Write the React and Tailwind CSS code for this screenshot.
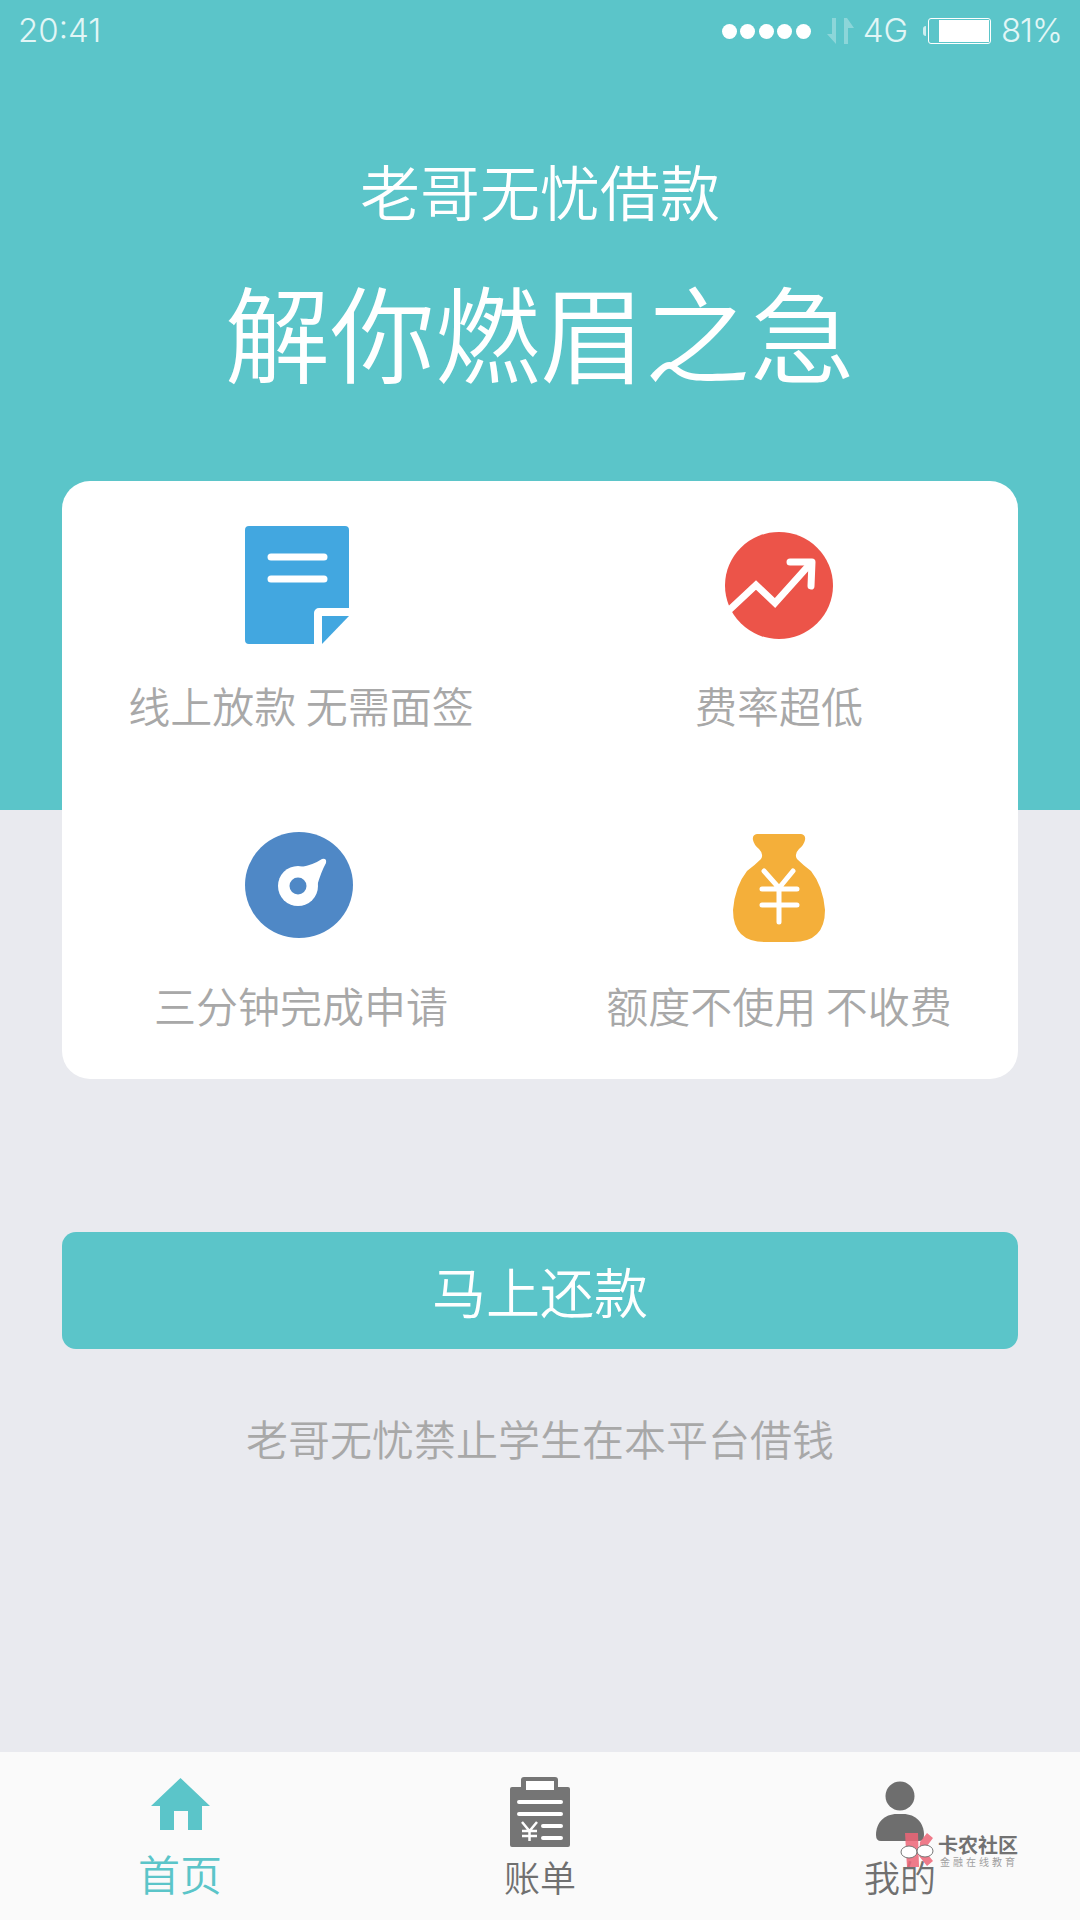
const cjk = { fontFamily: '"Noto Sans CJK SC", sans-serif' };

const features = [
  { label: '线上放款 无需面签', icon: <DocIcon />, iconClass: 'mr-[8px]', textClass: 'mt-[33px]' },
  { label: '费率超低', icon: <TrendIcon />, iconClass: '', textClass: 'mt-[33px]' },
  { label: '三分钟完成申请', icon: <GaugeIcon />, iconClass: 'mr-[4px]', textClass: 'mt-[33px]' },
  { label: '额度不使用 不收费', icon: <BagIcon />, iconClass: 'mt-[3px]', textClass: 'mt-[30px]' },
];

function DocIcon() {
  return (
    <svg width="104" height="118" viewBox="0 0 104 118">
      <path d="M4 0H100a4 4 0 0 1 4 4V82H74a5 5 0 0 0-5 5V118H4a4 4 0 0 1-4-4V4a4 4 0 0 1 4-4Z" fill="#42a7e0" />
      <path d="M77 90H104L77 118Z" fill="#42a7e0" />
      <path d="M26 31H79M26 53H79" stroke="#fff" strokeWidth="7" strokeLinecap="round" />
    </svg>
  );
}

function TrendIcon() {
  return (
    <svg width="108" height="107" viewBox="0 0 108 107">
      <ellipse cx="54" cy="53.5" rx="54" ry="53.5" fill="#ec5449" />
      <path d="M0 82L31 53L50 71L85 32" fill="none" stroke="#fff" strokeWidth="7" />
      <path d="M65 30H87L86 54" fill="none" stroke="#fff" strokeWidth="7" strokeLinecap="round" strokeLinejoin="round" />
    </svg>
  );
}

function GaugeIcon() {
  return (
    <svg width="108" height="106" viewBox="0 0 108 106">
      <ellipse cx="54" cy="53" rx="54" ry="53" fill="#4f88c6" />
      <circle cx="53" cy="54" r="20" fill="#fff" />
      <path d="M56 35Q68 33 77 27Q82 26 81 31Q76 40 72 54Z" fill="#fff" />
      <circle cx="53" cy="54" r="8.5" fill="#4f88c6" />
    </svg>
  );
}

function BagIcon() {
  return (
    <svg width="92" height="108" viewBox="0 0 92 108">
      <path
        d="M24 0H68Q73 1 72 6Q71 11 66 15Q61 20 64 25Q70 31 78 37Q90 52 92 76Q92 108 60 108H32Q0 108 0 76Q2 52 14 37Q22 31 28 25Q31 20 26 15Q21 11 20 6Q19 1 24 0Z"
        fill="#f4af3a"
      />
      <path d="M31 37L46 54L60 37M29 55H64M29 71H64M46 54V88" fill="none" stroke="#fff" strokeWidth="5" strokeLinecap="round" />
    </svg>
  );
}

function HomeIcon() {
  return (
    <svg width="59" height="52" viewBox="0 0 59 52">
      <path d="M29.5 0L59 28H51V52H37V33H23V52H9V28H0Z" fill="#5bc5c9" />
    </svg>
  );
}

function BillIcon() {
  return (
    <svg width="60" height="70" viewBox="0 0 60 70">
      <path d="M14 0H45a3 3 0 0 1 3 3V10H58a2 2 0 0 1 2 2V68a2 2 0 0 1-2 2H2a2 2 0 0 1-2-2V12a2 2 0 0 1 2-2H11V3a3 3 0 0 1 3-3Z" fill="#757575" />
      <rect x="16" y="4" width="28" height="9" fill="#fff" />
      <path d="M9 25H51M9 37H51M33 49H51M33 61H51" stroke="#fff" strokeWidth="4" strokeLinecap="round" />
      <path d="M12 45L19.5 54L27 45M12 54H27M12 59H27M19.5 54V64" fill="none" stroke="#fff" strokeWidth="2.5" />
    </svg>
  );
}

function UserIcon() {
  return (
    <svg width="50" height="60" viewBox="0 0 50 60">
      <circle cx="25" cy="15" r="14.5" fill="#6e6e6e" />
      <path d="M22 33H28C41 33 49 42 49 54Q49 60 44 60H6Q1 60 1 54C1 42 9 33 22 33Z" fill="#6e6e6e" />
    </svg>
  );
}

// community stamp sitting over the corner of the tab bar
function Watermark() {
  return (
    <div className="absolute left-[900px] top-[1833px] flex items-start gap-[4px]">
      <svg width="34" height="34" viewBox="0 0 34 34">
        <g fill="#ee6577" opacity="0.85">
          <path d="M5 0H18L19 34H7Z" />
          <path d="M20 9L27 0L33 5L24 17L33 28L27 33L19 23Z" />
        </g>
        <ellipse cx="9" cy="19" rx="8" ry="6" fill="#fff" stroke="#777" strokeWidth="1" />
        <ellipse cx="25" cy="18" rx="8" ry="6" fill="#fff" stroke="#777" strokeWidth="1" />
      </svg>
      <div className="flex flex-col pt-[1px]" style={cjk}>
        <span className="text-[20px] leading-[22px] font-bold text-[#727272] whitespace-nowrap">卡农社区</span>
        <span className="ml-[2px] text-[10px] leading-[12px] text-[#a0a0a0] tracking-[3px] whitespace-nowrap">金融在线教育</span>
      </div>
    </div>
  );
}

function StatusBar() {
  return (
    <div className="flex h-[62px] items-center justify-between pl-[18px] pr-[18px] font-light text-[#e2f6f6] text-[33px] font-['Inter',sans-serif]">
      <span>20:41</span>
      <div className="flex items-center">
        <div className="flex gap-[3.5px]">
          {[0, 1, 2, 3, 4].map((i) => (
            <span key={i} className="h-[15px] w-[15px] rounded-full bg-white" />
          ))}
        </div>
        <svg className="ml-[14px]" width="29" height="26" viewBox="0 0 29 26">
          <path d="M7 0H11V26L2 16H7ZM19 26V0H22L29 10H23V26Z" fill="#ffffff" opacity="0.3" />
        </svg>
        <span className="ml-[8px] w-[47px]">4G</span>
        <span className="ml-[14px] h-[10px] w-[3px] rounded-l-sm bg-white/70" />
        <div className="ml-[2px] flex h-[26px] w-[63px] items-stretch justify-end rounded-[3px] border border-white p-[1px]">
          <div className="w-[50px] bg-white" />
        </div>
        <span className="ml-[10px] tracking-[-1px]">81%</span>
      </div>
    </div>
  );
}

function Tab({ icon, label, className, iconBox }) {
  return (
    <div className="flex flex-col items-center">
      <div className={iconBox}>{icon}</div>
      <span className={className} style={cjk}>{label}</span>
    </div>
  );
}

export default function App() {
  return (
    <div className="relative flex h-[1920px] w-[1080px] flex-col overflow-hidden bg-[#e9eaef]" style={cjk}>
      <header className="h-[810px] bg-[#5bc5c9] text-center text-white">
        <StatusBar />
        <h2 className="mt-[86px] text-[60px] leading-[84px] font-[350]">老哥无忧借款</h2>
        <h1 className="mt-[35px] text-[105px] leading-[124px] font-[350]">解你燃眉之急</h1>
      </header>

      <section className="mx-[62px] -mt-[329px] grid h-[598px] grid-cols-2 rounded-[28px] bg-white pt-[45px]">
        {features.map((f) => (
          <div key={f.label} className="flex h-[300px] flex-col items-center">
            <div className={`flex h-[118px] items-center blur-[0.5px] ${f.iconClass}`}>{f.icon}</div>
            <p className={`text-[42px] leading-[56px] font-[350] text-[#a8a8a8] ${f.textClass}`}>{f.label}</p>
          </div>
        ))}
      </section>

      <button className="mx-[62px] mt-[153px] h-[117px] rounded-[14px] bg-[#5bc5c9] text-[54px] font-[350] text-white">
        马上还款
      </button>
      <p className="mt-[61px] text-center text-[42px] leading-[56px] font-[350] text-[#a8a8a8]">老哥无忧禁止学生在本平台借钱</p>

      <nav className="mt-auto grid h-[168px] grid-cols-3 bg-[#fafafa]">
        <Tab
          icon={<HomeIcon />}
          label="首页"
          iconBox="mt-[26px]"
          className="mt-[13px] text-[42px] leading-[60px] font-[350] text-[#5bc5c9]"
        />
        <Tab
          icon={<BillIcon />}
          label="账单"
          iconBox="mt-[25px]"
          className="mt-[4px] text-[36px] leading-[50px] font-[350] text-[#707070]"
        />
        <Tab
          icon={<UserIcon />}
          label="我的"
          iconBox="mt-[29px]"
          className="mt-[10px] text-[36px] leading-[50px] font-[350] text-[#707070]"
        />
      </nav>
      <Watermark />
    </div>
  );
}
